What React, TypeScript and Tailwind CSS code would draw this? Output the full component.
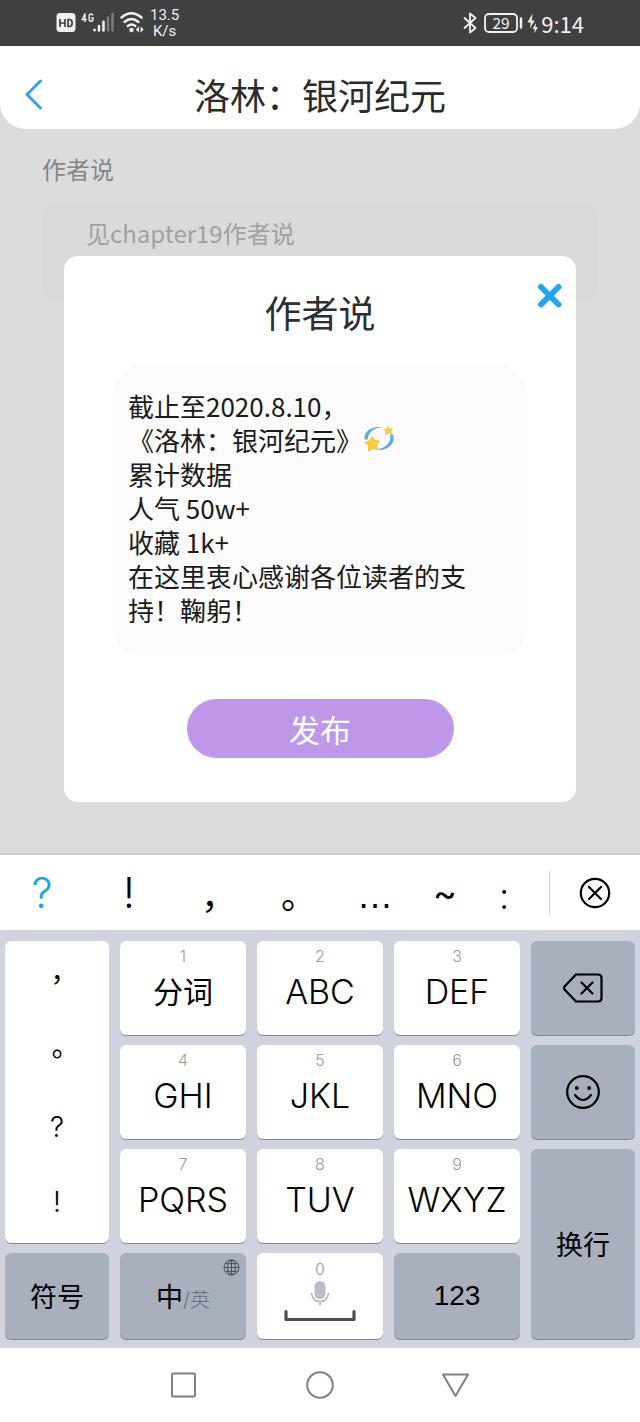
import React from "react";

const latin = "font-['Inter','Noto_Sans_CJK_SC',sans-serif]";
const cjk = "font-['Noto_Sans_CJK_SC',sans-serif]";

const message = [
  "截止至2020.8.10，",
  "《洛林：银河纪元》",
  "累计数据",
  "人气 50w+",
  "收藏 1k+",
  "在这里衷心感谢各位读者的支持！鞠躬！",
].join("\n");

function StatusBar() {
  return (
    <div className="flex h-[46px] items-center justify-between bg-[#404040] px-14 text-[#f2f2f2]">
      <div className="flex items-center">
        <svg width="90" height="24" viewBox="0 0 90 24" aria-hidden="true">
          <rect x="0.5" y="2" width="19" height="19" rx="3.5" fill="#f0f0f0" />
          <path d="M4 8v8M9 8v8M4 12h5M12 8.5v7h1.200q3 0 3-3.500t-3-3.500z" fill="none" stroke="#404040" strokeWidth="1.700" />
          <path d="M29 11V2.500L26.200 8.500H30.500M37 4.500Q36.500 3 35 3Q33.200 3 33.200 5V8.500Q33.200 10.300 35 10.300Q37 10.300 37 8.500V7H35.200" fill="none" stroke="#f2f2f2" strokeWidth="1.400" />
          <g strokeWidth="2.600" strokeLinecap="round" fill="none">
            <path d="M38.500 18.700v0.600M43 15v4.500M47.500 10.800v8.700" stroke="#f2f2f2" />
            <path d="M52 6.500v13M56.500 3v16.500" stroke="#7b7b7b" />
          </g>
          <g fill="none" stroke="#f2f2f2" strokeWidth="2.400" strokeLinecap="round">
            <path d="M65.500 6.500q9.800-8.500 20 0" />
            <path d="M68.500 11q7-6 14 0" />
            <path d="M71.800 15q3.800-3.200 7.500 0" />
          </g>
          <circle cx="75.500" cy="19" r="2.200" fill="#f2f2f2" />
          <path d="M83 15.500v6l-3.200-3zM84.500 15.500v6l3.200-3z" fill="#f2f2f2" />
        </svg>
        <div className="ml-1 text-center font-['Roboto',sans-serif] text-[15px] leading-4">
          13.5
          <br />
          K/s
        </div>
      </div>
      <div className="flex items-center gap-0.5">
        <svg width="76" height="24" viewBox="0 0 76 24" aria-hidden="true">
          <path d="M1.500 7l11 10-5.500 4.500v-19l5.500 4.500-11 10" fill="none" stroke="#f2f2f2" strokeWidth="1.800" strokeLinejoin="round" strokeLinecap="round" />
          <rect x="22" y="3" width="32" height="18" rx="4" fill="none" stroke="#f2f2f2" strokeWidth="1.800" />
          <path d="M58 7.500v9" stroke="#f2f2f2" strokeWidth="2.400" strokeLinecap="round" />
          <text x="38" y="17.500" textAnchor="middle" fontSize="15.500" fill="#f2f2f2" fontFamily="Noto Sans CJK SC, sans-serif">29</text>
          <path d="M69.500 2.500l-5 9h3.400l-1 6 4.800-8h-3z" fill="#f2f2f2" />
          <path d="M73 12l-3.500 6h2.300l-.8 4.500 4-6.200h-2.400z" fill="#f2f2f2" />
        </svg>
        <time className={`${cjk} text-[22px] leading-6`}>9:14</time>
      </div>
    </div>
  );
}

function Header() {
  return (
    <header className="grid h-[83px] grid-cols-[68px_1fr_68px] items-center rounded-b-[26px] bg-white pt-3">
      <button type="button" aria-label="返回" className="flex h-12 items-center justify-center">
        <svg width="20" height="32" viewBox="0 0 20 32" fill="none" stroke="#31a3ea" strokeWidth="3" strokeLinecap="round" strokeLinejoin="round">
          <path d="M16.500 3L3 16.500L16.500 30" />
        </svg>
      </button>
      <h1 className="text-center text-[36px] leading-12 text-[#2b2b2b]">洛林：银河纪元</h1>
    </header>
  );
}

function DizzyStars() {
  return (
    <svg className="pointer-events-none absolute top-[60px] left-[251px]" width="32" height="28" viewBox="0 0 32 28" role="img" aria-label="💫">
      <path d="M1.500 14.500C0.500 6 9 0.500 20 2.200C11 2.500 5 7 4.800 14.500Z" fill="#5fa8e0" />
      <path d="M27 9.500H30C33 19 24 26.500 12.500 24.500C22 24 29 18 27 9.500Z" fill="#5fa8e0" />
      <path d="M9 11.500L11.600 15.600L16.500 16L13.800 20L14.800 25L10.200 23.200L5.500 26L5.600 20.800L2 17.200L6.800 16Z" fill="#fbcf3c" stroke="#f5b92c" strokeWidth="0.800" strokeLinejoin="round" />
      <path d="M24.500 1.500L26 4L29.500 3.600L27.800 6.200L28.600 9.200L25.400 8.200L22.600 9.500L22.800 6.400L21 4.200L23.800 4Z" fill="#fbcf3c" stroke="#f5b92c" strokeWidth="0.600" strokeLinejoin="round" />
    </svg>
  );
}

function Dialog() {
  return (
    <section role="dialog" aria-labelledby="dialog-title" className="relative mx-[10%] rounded-[14px] bg-white pt-8 pb-11">
      <button type="button" aria-label="关闭" className="absolute top-6 right-2.5 flex size-8 items-center justify-center">
        <svg width="26" height="26" viewBox="0 0 26 26" stroke="#26a4f0" strokeWidth="6" strokeLinecap="round">
          <path d="M4 4l17.500 17.500M21.500 4L4 21.500" />
        </svg>
      </button>
      <h2 id="dialog-title" className="text-center text-[37px] leading-12 text-[#2d2d35]">作者说</h2>
      <div className="relative mx-12 mt-[29px] rounded-[30px] bg-[#fbfbfb] pt-6 pr-12 pb-[29px] pl-4">
        <textarea
          aria-labelledby="dialog-title"
          rows={7}
          defaultValue={message}
          className="block w-full resize-none overflow-hidden bg-transparent text-[26px] leading-[34px] text-[#1a1a1a] outline-none"
        />
        <DizzyStars />
      </div>
      <button type="button" className="mx-auto mt-[43px] block h-[59px] w-[267px] rounded-full bg-[#bf97e9] text-[31px] leading-[59px] text-white">
        发布
      </button>
    </section>
  );
}

const mark = "flex items-center justify-center leading-[48px]";

function SuggestionBar() {
  return (
    <div className={`${latin} grid h-[77px] grid-cols-[84fr_90fr_90fr_70fr_82fr_58fr_60fr_106fr] items-center border-t-2 border-[#cfcfcf] bg-white text-[36px] text-black`}>
      <button type="button" className={`${mark} text-[42px] font-light text-[#1ba4dc]`}>?</button>
      <button type="button" className={`${mark} text-[42px] font-light`}>!</button>
      <button type="button" className={`${mark} pt-1.5`}>，</button>
      <button type="button" className={`${mark} pt-1.5`}>。</button>
      <button type="button" className={`${mark} pt-1.5 font-['Liberation_Sans',sans-serif]`}>…</button>
      <button type="button" className={mark}>~</button>
      <button type="button" className={`${mark} pt-1.5 font-light`}>:</button>
      <div className="ml-[15px] flex h-11 items-center justify-center border-l border-[#d4d4d4]">
        <button type="button" aria-label="清除">
          <svg width="32" height="32" viewBox="0 0 32 32" fill="none" stroke="#000" strokeWidth="2.200" strokeLinecap="round">
            <circle cx="16" cy="16" r="14.200" />
            <path d="M10 10l12 12M22 10L10 22" />
          </svg>
        </button>
      </div>
    </div>
  );
}

const whiteKey = "rounded-md bg-white shadow-[0_1px_0_#85888f]";
const greyKey = "rounded-md bg-[#a8afbd] shadow-[0_1px_0_#7f838c]";

const letterRows = [
  [["1", "分词"], ["2", "ABC"], ["3", "DEF"]],
  [["4", "GHI"], ["5", "JKL"], ["6", "MNO"]],
  [["7", "PQRS"], ["8", "TUV"], ["9", "WXYZ"]],
];

function LetterKeys({ row }: { row: number }) {
  return (
    <>
      {letterRows[row].map(([digit, label]) => (
        <button key={digit} type="button" className={`${whiteKey} flex flex-col items-center pt-[3px]`}>
          <span className="text-base leading-6 text-[#999]">{digit}</span>
          <span className={digit === "1" ? "text-[30px] leading-12 font-normal" : "text-[34px] leading-12"}>{label}</span>
        </button>
      ))}
    </>
  );
}

function Keyboard() {
  return (
    <div className={`${latin} grid grid-cols-[104fr_126fr_126fr_126fr_104fr] grid-rows-[94px_94px_94px_86px] gap-x-[11px] gap-y-2.5 bg-[#d0d3de] px-[5px] pt-[11px] pb-[9px] font-light text-black`}>
      <div className={`${whiteKey} row-span-3 grid grid-rows-4 pb-1 text-[28px]`}>
        <button type="button" className="font-['Noto_Sans_CJK_TC',sans-serif] font-normal">，</button>
        <button type="button" className="font-['Noto_Sans_CJK_TC',sans-serif] font-normal">。</button>
        <button type="button">?</button>
        <button type="button">!</button>
      </div>
      <LetterKeys row={0} />
      <button type="button" aria-label="删除" className={`${greyKey} flex items-center justify-center`}>
        <svg width="40" height="30" viewBox="0 0 40 30" fill="none" stroke="#000" strokeWidth="2.200" strokeLinecap="round" strokeLinejoin="round">
          <path d="M13 1.500H35Q38.500 1.500 38.500 5V25Q38.500 28.500 35 28.500H13L1.500 16.500Q0.500 15 1.500 13.500Z" />
          <path d="M18.500 9.500l11 11M29.500 9.500l-11 11" />
        </svg>
      </button>
      <LetterKeys row={1} />
      <button type="button" aria-label="表情" className={`${greyKey} flex items-center justify-center`}>
        <svg width="34" height="34" viewBox="0 0 34 34" fill="none" stroke="#000" strokeWidth="2.200" strokeLinecap="round">
          <circle cx="17" cy="17" r="15.800" />
          <path d="M9 20q8 10 16 0" />
          <circle cx="10.800" cy="13" r="1.900" fill="#000" stroke="none" />
          <circle cx="23.200" cy="13" r="1.900" fill="#000" stroke="none" />
        </svg>
      </button>
      <LetterKeys row={2} />
      <button type="button" className={`${greyKey} row-span-2 pt-1 text-[27px] font-normal`}>换行</button>
      <button type="button" className={`${greyKey} pt-1 text-[27px] font-normal`}>符号</button>
      <button type="button" className={`${greyKey} relative pt-1`}>
        <span className="text-[27px] font-normal">中</span>
        <span className="text-xl text-[#6c717c]">/英</span>
        <svg className="absolute top-1.5 right-1.5" width="17" height="17" viewBox="0 0 17 17" fill="none" stroke="#4a4e57" strokeWidth="1">
          <circle cx="8.500" cy="8.500" r="7.500" />
          <ellipse cx="8.500" cy="8.500" rx="3.800" ry="7.500" />
          <path d="M8.500 1v15M1 8.500h15M2.300 4.700h12.400M2.300 12.300h12.400" />
        </svg>
      </button>
      <button type="button" aria-label="空格" className={`${whiteKey} flex flex-col items-center pt-1`}>
        <span className="text-base leading-6 text-[#999]">0</span>
        <svg width="72" height="42" viewBox="0 0 72 42" fill="none">
          <rect x="30.500" y="0" width="11" height="18" rx="5.500" fill="#b9bdc8" />
          <path d="M27.500 12q1 8.500 8.500 8.500t8.500-8.500M36 20.500v4" stroke="#b0b0b4" strokeWidth="1.600" />
          <path d="M2 30.500v8H70V30.500" stroke="#4d4d4d" strokeWidth="3.200" strokeLinecap="round" strokeLinejoin="round" />
        </svg>
      </button>
      <button type="button" className={`${greyKey} font-['Liberation_Sans',sans-serif] text-[28px] font-normal`}>123</button>
    </div>
  );
}

function NavBar() {
  return (
    <nav className="flex h-[74px] items-center justify-center gap-[106px] bg-white">
      <button type="button" aria-label="最近任务">
        <svg width="30" height="30" viewBox="0 0 30 30" fill="none" stroke="#808080" strokeWidth="2">
          <rect x="3" y="3.500" width="23" height="23" rx="1" />
        </svg>
      </button>
      <button type="button" aria-label="主页">
        <svg width="30" height="30" viewBox="0 0 30 30" fill="none" stroke="#808080" strokeWidth="2">
          <circle cx="15" cy="15" r="12.800" />
        </svg>
      </button>
      <button type="button" aria-label="后退">
        <svg width="30" height="30" viewBox="0 0 30 30" fill="none" stroke="#808080" strokeWidth="2" strokeLinejoin="round">
          <path d="M2 4.500H27L14.500 26Z" />
        </svg>
      </button>
    </nav>
  );
}

export default function App() {
  return (
    <div className={`${cjk} bg-[#dcdcdc]`}>
      <StatusBar />
      <Header />
      <main className="grid">
        <section className="col-start-1 row-start-1 px-[42px] pt-5">
          <h2 className="text-[24px] leading-10 text-[#868686]">作者说</h2>
          <div className="mt-[14px] h-[98px] rounded-[20px] bg-[#dadada] px-11 pt-2.5">
            <p className="text-[24px] leading-10 text-[#a0a0a0]">见chapter19作者说</p>
          </div>
        </section>
        <div className="col-start-1 row-start-1 pt-[127px] pb-[51px]">
          <Dialog />
        </div>
      </main>
      <SuggestionBar />
      <Keyboard />
      <NavBar />
    </div>
  );
}
